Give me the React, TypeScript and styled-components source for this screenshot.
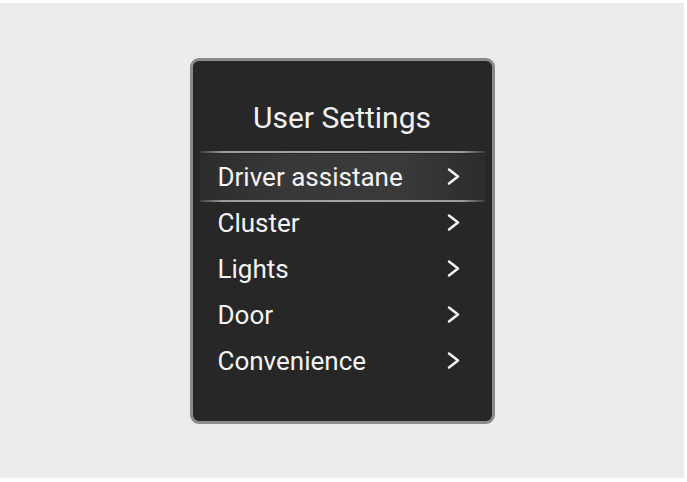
import styled, { createGlobalStyle } from "styled-components";

const GlobalStyle = createGlobalStyle`
  body {
    margin: 0;
    background: #ffffff;
    font-family: Roboto, "Noto Sans", sans-serif;
  }
`

const Page = styled.div`
  width: 684px;
  height: 475px;
  margin-top: 3px;
  background: #ececec;
  display: flex;
  align-items: center;
  justify-content: center;
`

const Panel = styled.div`
  width: 299px;
  height: 360px;
  box-sizing: content-box;
  border: 3px solid #8a8a8a;
  border-radius: 9px;
  background: #272727;
  display: flex;
  flex-direction: column;
`

const Title = styled.h1`
  margin: 0;
  padding-top: 40px;
  height: 53px;
  box-sizing: content-box;
  text-align: center;
  color: #f2f2f2;
  font-size: 30px;
  font-weight: 400;
  line-height: 34px;
`

const List = styled.ul`
  list-style: none;
  margin: 0;
  padding: 0 7px;
  display: flex;
  flex-direction: column;
`

const Row = styled.li<{ $active?: boolean }>`
  position: relative;
  height: 46px;
  display: flex;
  align-items: center;
  justify-content: space-between;
  padding: 0 24px 0 18px;
  color: #f4f4f4;
  font-size: 26px;
  background: ${({ $active }) => $active
    ? "linear-gradient(90deg, #2c2c2c 0%, #383838 30%, #3a3a3a 70%, #2c2c2c 100%)"
    : "transparent"};

  &::before, &::after {
    content: "";
    display: ${({ $active }) => $active ? "block" : "none"};
    position: absolute;
    left: 0;
    right: 0;
    height: 2px;
    background: linear-gradient(90deg, rgba(150,150,150,0.2) 0%, #9c9c9c 8%, #a4a4a4 50%, #9c9c9c 92%, rgba(150,150,150,0.2) 100%);
  }
  &::before { top: -3px; }
  &::after { bottom: -2px; }
`

const Label = styled.span`
  line-height: 1;
`

const Chevron = () => (
  <svg width="15" height="19" viewBox="0 0 15 19">
    <path d="M3 2.5 L12 9.5 L3 16.5" fill="none" stroke="#f4f4f4" strokeWidth="2.5" strokeLinecap="round" strokeLinejoin="round" />
  </svg>
)

const items = ["Driver assistane", "Cluster", "Lights", "Door", "Convenience"]

export default function App() {
  return (
    <>
      <GlobalStyle />
      <Page>
        <Panel>
          <Title>User Settings</Title>
          <List>
            {items.map((item, index) => (
              <Row key={item} $active={index === 0}>
                <Label>{item}</Label>
                <Chevron />
              </Row>
            ))}
          </List>
        </Panel>
      </Page>
    </>
  )
}
